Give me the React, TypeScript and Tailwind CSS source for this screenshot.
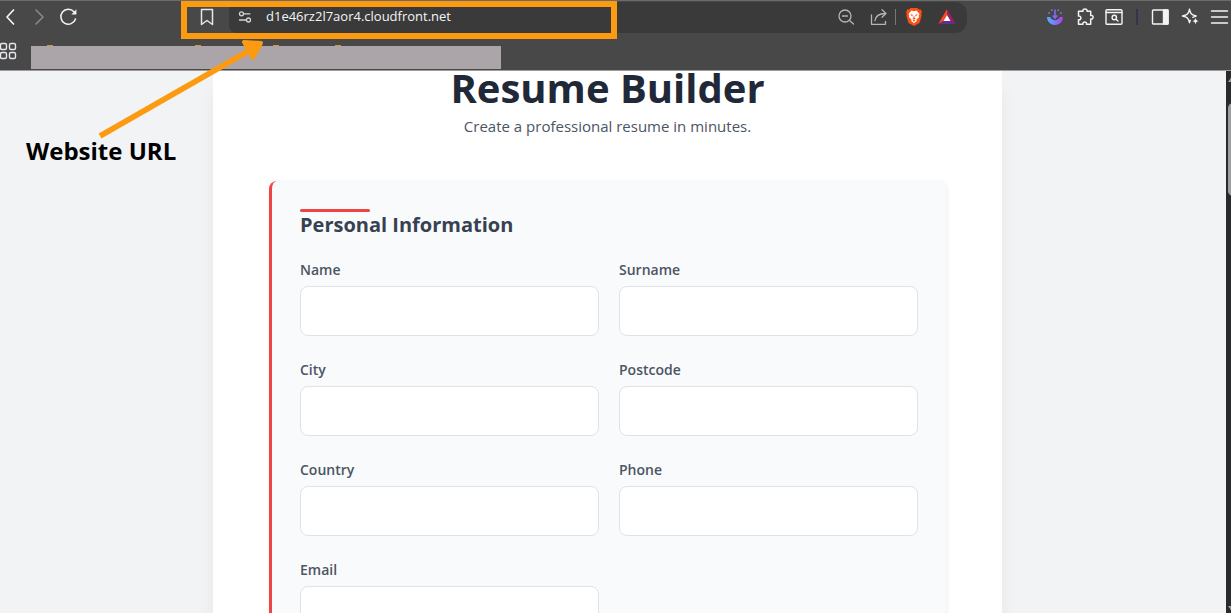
import type { ReactNode } from "react";

type IconButtonProps = { label: string; children: ReactNode; className?: string };

function IconButton({ label, children, className = "" }: IconButtonProps) {
  return (
    <button
      type="button"
      aria-label={label}
      className={`flex size-5 shrink-0 items-center justify-center ${className}`}
    >
      {children}
    </button>
  );
}

type StrokeProps = { children: ReactNode; width?: number };

function Stroke({ children, width = 1.5 }: StrokeProps) {
  return (
    <svg
      viewBox="0 0 20 20"
      className="size-5"
      fill="none"
      stroke="currentColor"
      strokeWidth={width}
      strokeLinecap="round"
      strokeLinejoin="round"
      aria-hidden="true"
    >
      {children}
    </svg>
  );
}

function NavButtons() {
  return (
    <div className="flex gap-[9px]">
      <IconButton label="Back" className="text-gray-100">
        <Stroke width={1.7}><path d="M13.5 3 7 10l6.500 7" /></Stroke>
      </IconButton>
      <IconButton label="Forward" className="text-[#8a8a8a]">
        <Stroke><path d="m7 3 7 7-7 7" /></Stroke>
      </IconButton>
      <IconButton label="Reload" className="text-gray-100">
        <Stroke>
          <path d="M17.500 12A7.500 7.500 0 1 1 16 4.800" />
          <path d="M18.400 2.200v5.400h-5z" fill="currentColor" stroke="none" />
        </Stroke>
      </IconButton>
    </div>
  );
}

function AddressBar() {
  return (
    <div className="flex h-[31px] min-w-0 flex-1 items-center rounded-r-xl rounded-l-lg bg-[#3a3a3a] pr-[10px] pl-[6px] text-gray-300">
      <IconButton label="Site settings">
        <Stroke width={1.3}>
          <circle cx="6.500" cy="6.800" r="2" />
          <path d="M8.800 6.800H15M4.500 13H11" />
          <circle cx="13.500" cy="13" r="2" />
        </Stroke>
      </IconButton>
      <input
        type="text"
        aria-label="Address"
        defaultValue="d1e46rz2l7aor4.cloudfront.net"
        className="ml-[11px] min-w-0 flex-1 bg-transparent text-[13px] text-gray-100 outline-none"
      />
      <IconButton label="Zoom out" className="text-[#b5b5b5]">
        <Stroke width={1.3}>
          <circle cx="9" cy="9" r="6" />
          <path d="M6.500 9h5M13.500 13.500 17.500 17" />
        </Stroke>
      </IconButton>
      <IconButton label="Share" className="ml-[13px] text-[#b5b5b5]">
        <Stroke width={1.3}>
          <path d="M2.500 8v9.300h14v-3" />
          <path d="M6 13.500C6.500 9 10 6.700 16.500 6.500M13 2.800l4 3.700-4 3.700" />
        </Stroke>
      </IconButton>
      <span className="ml-[6px] h-4 w-px bg-[#777777]" />
      <IconButton label="Shields" className="ml-2">
        <svg viewBox="0 0 20 20" className="size-5" aria-hidden="true">
          <path d="M6.500 1h7l1.500 1.500 1.500-.2 1.500 2.700-.7 2 .4 1.500-2.200 7.500L10 19l-5.500-3L2.300 8.500l.4-1.500L2 5l1.500-2.700 1.500.2z" fill="#fb4f14" />
          <path d="m10 4.200 2.500-.7 3 3.500-.8 1.800.3 1.400-2.500 2.400.3 1.500-2.800 2.200-2.800-2.200.3-1.500L5 10.200l.3-1.400L4.500 7l3-3.500z" fill="#fff" />
          <path d="m6.300 7 2.400.7-.4 2zM13.700 7l-2.400.7.4 2zM10 8l.7 3 1 .8-1.700.9-1.700-.9 1-.8zM8.400 13.600l1.600-.7 1.600.7-1.600 1.200z" fill="#fb4f14" />
        </svg>
      </IconButton>
      <IconButton label="Rewards" className="ml-[13px]">
        <svg viewBox="0 0 20 20" className="size-5" aria-hidden="true">
          <path d="M10 2 1.300 17l5.200-3L10 8z" fill="#ff4724" />
          <path d="M10 2v6l3.500 6 5.200 3z" fill="#9e1f63" />
          <path d="M1.300 17h17.400l-5.200-3h-7z" fill="#662d91" />
          <path d="m10 8 3.500 6h-7z" fill="#fff" />
        </svg>
      </IconButton>
    </div>
  );
}

function ToolbarActions() {
  return (
    <div className="ml-[78px] flex items-center text-gray-100">
      <IconButton label="Downloader extension">
        <svg viewBox="0 0 20 20" className="size-5" fill="none" aria-hidden="true">
          <defs>
            <linearGradient id="tray" x1="2" y1="0" x2="18" y2="0" gradientUnits="userSpaceOnUse">
              <stop stopColor="#4fb4ff" />
              <stop offset="1" stopColor="#b23cf0" />
            </linearGradient>
          </defs>
          <path d="M2 10h3.200c1.600 4.200 8 4.200 9.600 0H18c-.3 10.600-15.700 10.600-16 0z" fill="url(#tray)" />
          <path d="M10 2.500V10M7.800 8.500 10 11l2.200-2.500" stroke="#806cf0" strokeWidth="1.600" />
          <g fill="#6c7cf0">
            <circle cx="6.800" cy="3.200" r=".9" />
            <circle cx="4" cy="6" r=".9" />
            <circle cx="13.200" cy="3.200" r=".9" />
            <circle cx="16" cy="6" r=".9" />
          </g>
        </svg>
      </IconButton>
      <IconButton label="Extensions" className="ml-[10px]">
        <Stroke>
          <path d="M3.500 4.300H8C7 1.200 12.800 1.200 12 4.300h3.700v4.200c3.200-.9 3.200 4.200 0 3.400v5.300H11.500c.8-3-4.300-3-3.500 0H3.500v-4.400c3.200.6 3.200-4.400 0-3.800z" />
        </Stroke>
      </IconButton>
      <IconButton label="Search tabs" className="ml-[9px]">
        <Stroke width={1.400}>
          <rect x="2" y="2.700" width="16" height="14.600" rx="1" />
          <path d="M2 5.500h16M12 12.200l2 1.800" />
          <circle cx="10.300" cy="10.500" r="2.200" />
        </Stroke>
      </IconButton>
      <span className="mx-3 h-4 w-[2px] bg-[#3b3149]" />
      <IconButton label="Sidebar">
        <Stroke width={1.400}>
          <rect x="2.500" y="3" width="15.500" height="14" rx="1" />
          <path d="M13.500 3H18v14h-4.500z" fill="currentColor" />
        </Stroke>
      </IconButton>
      <IconButton label="Assistant" className="ml-[10px]">
        <Stroke width={1.400}>
          <path d="M9.500 2.300c1 4.500 2.200 5.700 6.700 6.700-1.500.4-2.500.8-3.300 1.300M9.500 2.300C8.500 6.800 7.300 8 2.500 9c4.800 1 6 2.200 7 6.700.2-.9.500-1.700.8-2.300" />
          <path d="M15.500 10.700c.6 2.400 1 2.800 3.300 3.400-2.300.6-2.700 1-3.300 3.400-.6-2.400-1-2.800-3.300-3.400 2.300-.6 2.700-1 3.300-3.400z" fill="currentColor" stroke="none" />
        </Stroke>
      </IconButton>
      <IconButton label="Menu" className="ml-[10px]">
        <Stroke width={1.400}><path d="M1.500 4h16M1.500 10h16M1.500 16h16" /></Stroke>
      </IconButton>
    </div>
  );
}

function BookmarksBar() {
  return (
    <div className="flex flex-1 items-start">
      <IconButton label="All bookmarks" className="mt-2 -ml-[2px] text-gray-200">
        <Stroke width={1.400}>
          <rect x="2.500" y="2.500" width="6" height="6" rx="1.500" />
          <rect x="11.500" y="2.500" width="6" height="6" rx="1.500" />
          <rect x="2.500" y="11.500" width="6" height="6" rx="1.500" />
          <rect x="11.500" y="11.500" width="6" height="6" rx="1.500" />
        </Stroke>
      </IconButton>
      <div className="mt-3 ml-[13px] w-[470px]">
        <div className="flex h-px pl-4">
          <span className="w-[6px] bg-[#d39b26]" />
          <span className="ml-[142px] w-[6px] bg-[#d39b26]" />
          <span className="ml-[72px] w-[6px] bg-[#d39b26]" />
          <span className="ml-[56px] w-[6px] bg-[#d39b26]" />
        </div>
        <div className="h-[23px] bg-[#aba5a9]" />
      </div>
    </div>
  );
}

function BrowserChrome() {
  return (
    <header className="flex h-[71px] shrink-0 flex-col border-t border-b border-t-[#6b6b6b] border-b-[#9c9c9c] bg-[#484848]">
      <div className="flex h-8 items-center pr-px">
        <NavButtons />
        <IconButton label="Bookmark this page" className="mr-3 ml-[119px] text-gray-200">
          <Stroke><path d="M4.500 2.500h11v15L10 13.500l-5.500 4z" /></Stroke>
        </IconButton>
        <AddressBar />
        <ToolbarActions />
      </div>
      <BookmarksBar />
    </header>
  );
}

const fields = [
  { id: "name", label: "Name", type: "text" },
  { id: "surname", label: "Surname", type: "text" },
  { id: "city", label: "City", type: "text" },
  { id: "postcode", label: "Postcode", type: "text" },
  { id: "country", label: "Country", type: "text" },
  { id: "phone", label: "Phone", type: "tel" },
  { id: "email", label: "Email", type: "email" },
];

function ResumeForm() {
  return (
    <form className="rounded-lg border-l-3 border-[#ef4444] bg-[#f9fafc] px-7 pt-7 pb-10 shadow-[1px_1px_4px_rgba(0,0,0,0.07)]">
      <div className="h-[3px] w-[70px] rounded-full bg-[#ef4444]" />
      <h2 className="text-xl leading-[26px] font-bold text-[#374151]">Personal Information</h2>
      <div className="mt-[22px] grid grid-cols-2 gap-x-5 gap-y-6">
        {fields.map((field) => (
          <div key={field.id} className="flex flex-col gap-[6px]">
            <label htmlFor={field.id} className="text-sm font-semibold text-[#4b5563]">
              {field.label}
            </label>
            <input
              id={field.id}
              type={field.type}
              className="h-[50px] w-full rounded-lg border border-[#dfe2e7] bg-white px-4 outline-none"
            />
          </div>
        ))}
      </div>
    </form>
  );
}

function ScrollTrack() {
  return (
    <div className="flex w-[5px] shrink-0 flex-col overflow-hidden bg-[#2a2a2a] pt-1 pl-[2px]">
      <svg viewBox="0 0 10 7" className="h-[7px] w-[10px] shrink-0" aria-hidden="true">
        <path d="M0 7 5 0l5 7z" fill="#9f9f9f" />
      </svg>
      <div className="mt-[21px] h-[93px] w-[10px] rounded-md bg-[#9f9f9f]" />
      <svg viewBox="0 0 10 7" className="mt-auto h-[7px] w-[10px] shrink-0" aria-hidden="true">
        <path d="M0 0h10L5 7z" fill="#9f9f9f" />
      </svg>
    </div>
  );
}

function UrlCallout() {
  return (
    <div className="pointer-events-none absolute inset-0">
      <div className="absolute top-px left-[181px] h-[38px] w-[436px] border-6 border-[#fc9a12]" />
      <svg viewBox="0 0 280 150" className="absolute top-0 left-0 h-[150px] w-[280px]" aria-hidden="true">
        <path d="M100 136 252 49" stroke="#fc9a12" strokeWidth="5.500" />
        <path d="m244 42 17 1-8 15z" fill="#fc9a12" stroke="#fc9a12" strokeWidth="4" strokeLinejoin="round" />
      </svg>
      <p className="absolute top-[135px] left-[26px] text-2xl leading-8 font-bold whitespace-nowrap text-black">
        Website URL
      </p>
    </div>
  );
}

export default function App() {
  return (
    <div className="relative flex h-screen flex-col overflow-hidden bg-[#f2f3f5] font-['Open_Sans',sans-serif]">
      <BrowserChrome />
      <div className="flex min-h-0 flex-1">
        <main className="min-w-0 flex-1 pr-[11px]">
          <div className="mx-auto max-w-[789px] bg-white px-14 pt-px pb-14 shadow-[0_20px_16px_rgba(0,0,0,0.05)]">
            <h1 className="text-center text-[40px] leading-8 font-bold text-[#1f2937]">Resume Builder</h1>
            <p className="pt-[10px] pb-[43px] text-center text-[15px] leading-6 text-[#4b5563]">
              Create a professional resume in minutes.
            </p>
            <ResumeForm />
          </div>
        </main>
        <ScrollTrack />
      </div>
      <UrlCallout />
    </div>
  );
}
